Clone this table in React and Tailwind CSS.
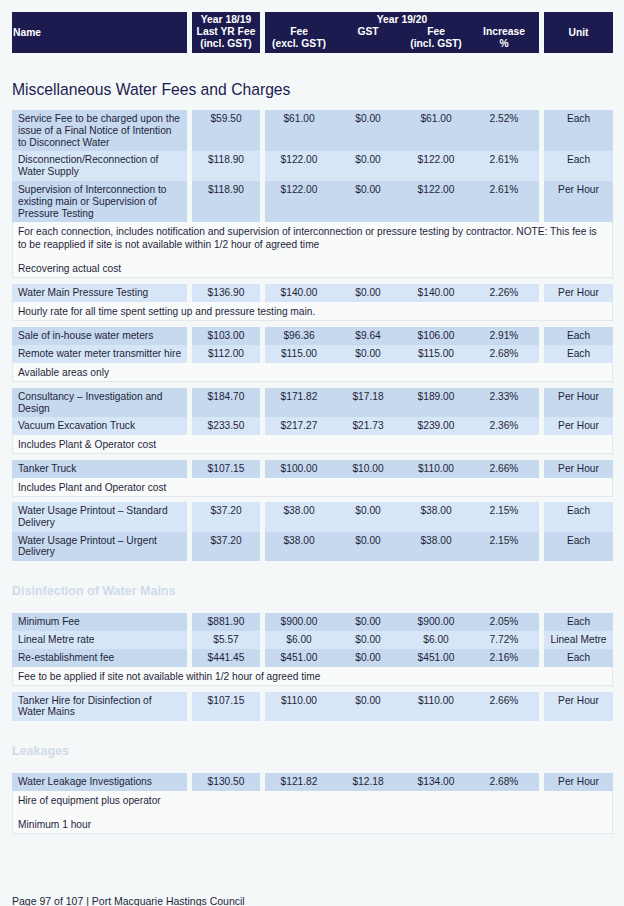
const DARK = 'bg-[#c6d9ee]'
const LIGHT = 'bg-[#d6e6f6]'

const GROUPS = [
  {
    mt: 'mt-[11px]',
    rows: [
      { name: ['Service Fee to be charged upon the', 'issue of a Final Notice of Intention', 'to Disconnect Water'], last: '$59.50', fee: '$61.00', gst: '$0.00', incl: '$61.00', inc: '2.52%', unit: 'Each', dark: true },
      { name: ['Disconnection/Reconnection of', 'Water Supply'], last: '$118.90', fee: '$122.00', gst: '$0.00', incl: '$122.00', inc: '2.61%', unit: 'Each' },
      { name: ['Supervision of Interconnection to', 'existing main or Supervision of', 'Pressure Testing'], last: '$118.90', fee: '$122.00', gst: '$0.00', incl: '$122.00', inc: '2.61%', unit: 'Per Hour', dark: true },
    ],
    note: [
      'For each connection, includes notification and supervision of interconnection or pressure testing by contractor. NOTE: This fee is to be reapplied if site is not available within 1/2 hour of agreed time',
      'Recovering actual cost',
    ],
  },
  {
    mt: 'mt-[6px]',
    rows: [
      { name: ['Water Main Pressure Testing'], last: '$136.90', fee: '$140.00', gst: '$0.00', incl: '$140.00', inc: '2.26%', unit: 'Per Hour' },
    ],
    note: ['Hourly rate for all time spent setting up and pressure testing main.'],
  },
  {
    mt: 'mt-[6px]',
    rows: [
      { name: ['Sale of in-house water meters'], last: '$103.00', fee: '$96.36', gst: '$9.64', incl: '$106.00', inc: '2.91%', unit: 'Each', dark: true },
      { name: ['Remote water meter transmitter hire'], last: '$112.00', fee: '$115.00', gst: '$0.00', incl: '$115.00', inc: '2.68%', unit: 'Each' },
    ],
    note: ['Available areas only'],
  },
  {
    mt: 'mt-[6px]',
    rows: [
      { name: ['Consultancy – Investigation and', 'Design'], last: '$184.70', fee: '$171.82', gst: '$17.18', incl: '$189.00', inc: '2.33%', unit: 'Per Hour', dark: true },
      { name: ['Vacuum Excavation Truck'], last: '$233.50', fee: '$217.27', gst: '$21.73', incl: '$239.00', inc: '2.36%', unit: 'Per Hour' },
    ],
    note: ['Includes Plant & Operator cost'],
  },
  {
    mt: 'mt-[6px]',
    rows: [
      { name: ['Tanker Truck'], last: '$107.15', fee: '$100.00', gst: '$10.00', incl: '$110.00', inc: '2.66%', unit: 'Per Hour', dark: true },
    ],
    note: ['Includes Plant and Operator cost'],
  },
  {
    mt: 'mt-[5px]',
    rows: [
      { name: ['Water Usage Printout – Standard', 'Delivery'], last: '$37.20', fee: '$38.00', gst: '$0.00', incl: '$38.00', inc: '2.15%', unit: 'Each' },
      { name: ['Water Usage Printout – Urgent', 'Delivery'], last: '$37.20', fee: '$38.00', gst: '$0.00', incl: '$38.00', inc: '2.15%', unit: 'Each', dark: true },
    ],
  },
]

const DISINFECTION = [
  {
    mt: 'mt-[14px]',
    rows: [
      { name: ['Minimum Fee'], last: '$881.90', fee: '$900.00', gst: '$0.00', incl: '$900.00', inc: '2.05%', unit: 'Each', dark: true },
      { name: ['Lineal Metre rate'], last: '$5.57', fee: '$6.00', gst: '$0.00', incl: '$6.00', inc: '7.72%', unit: 'Lineal Metre' },
      { name: ['Re-establishment fee'], last: '$441.45', fee: '$451.00', gst: '$0.00', incl: '$451.00', inc: '2.16%', unit: 'Each', dark: true },
    ],
    note: ['Fee to be applied if site not available within 1/2 hour of agreed time'],
  },
  {
    mt: 'mt-[6px]',
    rows: [
      { name: ['Tanker Hire for Disinfection of', 'Water Mains'], last: '$107.15', fee: '$110.00', gst: '$0.00', incl: '$110.00', inc: '2.66%', unit: 'Per Hour' },
    ],
  },
]

const LEAKAGES = [
  {
    mt: 'mt-[14px]',
    rows: [
      { name: ['Water Leakage Investigations'], last: '$130.50', fee: '$121.82', gst: '$12.18', incl: '$134.00', inc: '2.68%', unit: 'Per Hour', dark: true },
    ],
    note: ['Hire of equipment plus operator', 'Minimum 1 hour'],
  },
]

function Header() {
  return (
    <div className="grid grid-cols-[175px_68px_274px_69px] gap-x-[5px] text-[10.3px] leading-[12px] font-bold text-white">
      <div className="bg-[#1c1b4f] h-[41px] flex items-center pl-[1px]">Name</div>
      <div className="bg-[#1c1b4f] h-[41px] pt-[2px] text-center">
        <div>Year 18/19</div>
        <div>Last YR Fee</div>
        <div>(incl. GST)</div>
      </div>
      <div className="bg-[#1c1b4f] h-[41px] pt-[2px] text-center">
        <div>Year 19/20</div>
        <div className="grid grid-cols-[68px_70px_66px_70px]">
          <div>Fee<br />(excl. GST)</div>
          <div>GST</div>
          <div>Fee<br />(incl. GST)</div>
          <div>Increase<br />%</div>
        </div>
      </div>
      <div className="bg-[#1c1b4f] h-[41px] flex items-center justify-center">Unit</div>
    </div>
  )
}

function Row({ row }) {
  const bg = row.dark ? DARK : LIGHT
  const cell = `${bg} pt-[3px] pb-[3px]`
  return (
    <div className="grid grid-cols-[175px_68px_274px_69px] gap-x-[5px] text-[10.2px] leading-[11.8px] text-[#1f1f3a]">
      <div className={`${cell} pl-[6px] pr-[2px]`}>
        {row.name.map((l) => (
          <div key={l} className="whitespace-nowrap">{l}</div>
        ))}
      </div>
      <div className={`${cell} text-center`}>{row.last}</div>
      <div className={`${cell} grid grid-cols-[68px_70px_66px_70px] text-center content-start`}>
        <div>{row.fee}</div>
        <div>{row.gst}</div>
        <div>{row.incl}</div>
        <div>{row.inc}</div>
      </div>
      <div className={`${cell} text-center whitespace-nowrap`}>{row.unit}</div>
    </div>
  )
}

function Note({ lines }) {
  return (
    <div className="bg-[#f9fbfb] border border-t-0 border-[#e2e8ec] pl-[5px] pr-[6px] pt-[3px] pb-[2px] text-[10.2px] leading-[13px] text-[#1f1f3a] flex flex-col gap-[11px]">
      {lines.map((l) => (
        <p key={l}>{l}</p>
      ))}
    </div>
  )
}

function Group({ group }) {
  return (
    <div className={group.mt}>
      {group.rows.map((r) => (
        <Row key={r.name.join(' ')} row={r} />
      ))}
      {group.note && <Note lines={group.note} />}
    </div>
  )
}

export default function App() {
  return (
    <div className="min-h-screen bg-[#f5f8f8] font-['Liberation_Sans',Arial,sans-serif] pt-[12px] pl-[12px] w-[624px] h-[906px] overflow-hidden">
      <div className="w-[601px]">
        <Header />

        <h2 className="mt-[28px] text-[15.7px] leading-[18px] text-[#1c1b4f]">Miscellaneous Water Fees and Charges</h2>
        {GROUPS.map((g, i) => (
          <Group key={i} group={g} />
        ))}

        <h3 className="mt-[22px] text-[12.5px] leading-[16px] font-bold text-[#cfdbe9]">Disinfection of Water Mains</h3>
        {DISINFECTION.map((g, i) => (
          <Group key={i} group={g} />
        ))}

        <h3 className="mt-[22px] text-[12.5px] leading-[16px] font-bold text-[#cfdbe9]">Leakages</h3>
        {LEAKAGES.map((g, i) => (
          <Group key={i} group={g} />
        ))}

        <p className="mt-[61px] text-[10.5px] leading-[13px] text-[#1f1f3a]">Page 97 of 107 | Port Macquarie Hastings Council</p>
      </div>
    </div>
  )
}
